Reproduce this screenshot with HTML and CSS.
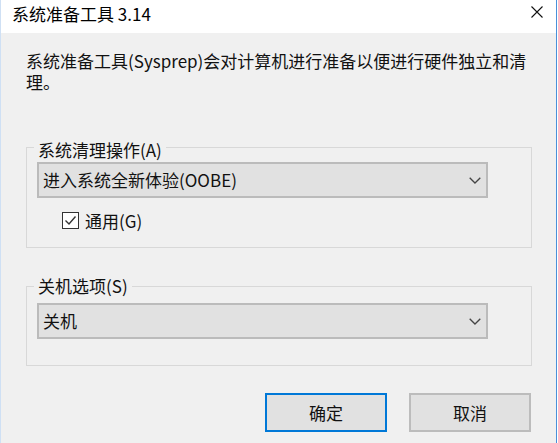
FILE: index.html
```html
<!DOCTYPE html>
<html lang="zh-CN">
<head>
<meta charset="utf-8">
<title>系统准备工具 3.14</title>
<link rel="stylesheet" href="styles.css">
</head>
<body>
<div class="window">
  <header class="titlebar">
    <span class="title">系统准备工具 3.14</span>
    <span class="close" aria-label="关闭">
      <svg width="12" height="12" viewBox="0 0 12 12"><path d="M0.5 0.5 L11.5 11.5 M11.5 0.5 L0.5 11.5" stroke="#111" stroke-width="1.1" fill="none"/></svg>
    </span>
  </header>
  <main class="content">
    <p class="desc">系统准备工具(Sysprep)会对计算机进行准备以便进行硬件独立和清理。</p>

    <fieldset class="group group-cleanup">
      <legend class="legend">系统清理操作(A)</legend>
      <div class="select">
        <span class="select-text">进入系统全新体验(OOBE)</span>
        <svg class="chevron" width="12" height="7" viewBox="0 0 12 7"><polyline points="0.7,0.7 6,6 11.3,0.7" stroke="#444" stroke-width="1.3" fill="none"/></svg>
      </div>
      <label class="check">
        <span class="box"><svg width="15" height="15" viewBox="0 0 15 15"><polyline points="2.5,7.5 6,11 12.5,3.5" stroke="#333" stroke-width="1.4" fill="none"/></svg></span>
        <span class="check-label">通用(G)</span>
      </label>
    </fieldset>

    <fieldset class="group group-shutdown">
      <legend class="legend">关机选项(S)</legend>
      <div class="select">
        <span class="select-text">关机</span>
        <svg class="chevron" width="12" height="7" viewBox="0 0 12 7"><polyline points="0.7,0.7 6,6 11.3,0.7" stroke="#444" stroke-width="1.3" fill="none"/></svg>
      </div>
    </fieldset>

    <div class="buttons">
      <button class="btn btn-default">确定</button>
      <button class="btn">取消</button>
    </div>
  </main>
</div>
</body>
</html>
```
FILE: styles.css
```css
* { box-sizing: border-box; }
html, body {
  margin: 0;
  padding: 0;
  background: #ffffff;
}
body {
  width: 558px;
  height: 443px;
  overflow: hidden;
  font-family: "Noto Sans CJK SC", "Noto Sans", sans-serif;
  font-size: 17px;
  color: #111;
}
.window {
  width: 557px;
  height: 443px;
  border-left: 1px solid #cfe0f4;
  border-right: 1px solid #4a90d9;
  background: #f0f0f0;
  display: flex;
  flex-direction: column;
}
.titlebar {
  height: 33px;
  background: #ffffff;
  display: flex;
  justify-content: space-between;
  align-items: flex-start;
  padding: 3px 13px 0 11px;
  flex: none;
}
.title {
  line-height: 21px;
  color: #000;
}
.close {
  display: block;
  padding-top: 3px;
  line-height: 0;
}
.content {
  padding: 0 24px 0 25px;
  flex: 1;
}
.desc {
  margin: 17px 0 0 0;
  line-height: 21px;
}
.group {
  margin: 42px 0 0 0;
  border: 1px solid #d8d8d8;
  padding: 2px 10px 18px 10px;
  min-width: 0;
}
.legend {
  padding: 6px 4px 0 4px;
  margin-left: -3px;
  line-height: 20px;
}
.group-shutdown {
  margin-top: 28px;
  padding: 7px 10px 26px 10px;
}
.group-shutdown .legend {
  padding-top: 0;
}
.select {
  width: 451px;
  height: 36px;
  border: 2px solid #bbbbbb;
  background: #e1e1e1;
  display: flex;
  align-items: center;
  justify-content: space-between;
  padding: 0 5px 0 4px;
}
.select-text {
  line-height: 20px;
}
.chevron {
  display: block;
}
.check {
  display: flex;
  align-items: center;
  height: 17px;
  margin-top: 14px;
  padding-left: 25px;
}
.box {
  width: 17px;
  height: 17px;
  border: 1px solid #333;
  background: #ffffff;
  display: flex;
  align-items: center;
  justify-content: center;
}
.box svg { display: block; }
.check-label {
  margin-left: 6px;
  line-height: 17px;
}
.buttons {
  display: flex;
  justify-content: flex-end;
  gap: 22px;
  margin-top: 27px;
  margin-right: 1px;
}
.btn {
  width: 122px;
  height: 39px;
  font-family: inherit;
  font-size: 17px;
  color: #111;
  background: #e1e1e1;
  border: 2px solid #bcbcbc;
  padding: 0;
  line-height: 20px;
}
.btn-default {
  border-color: #0078d7;
}
```
